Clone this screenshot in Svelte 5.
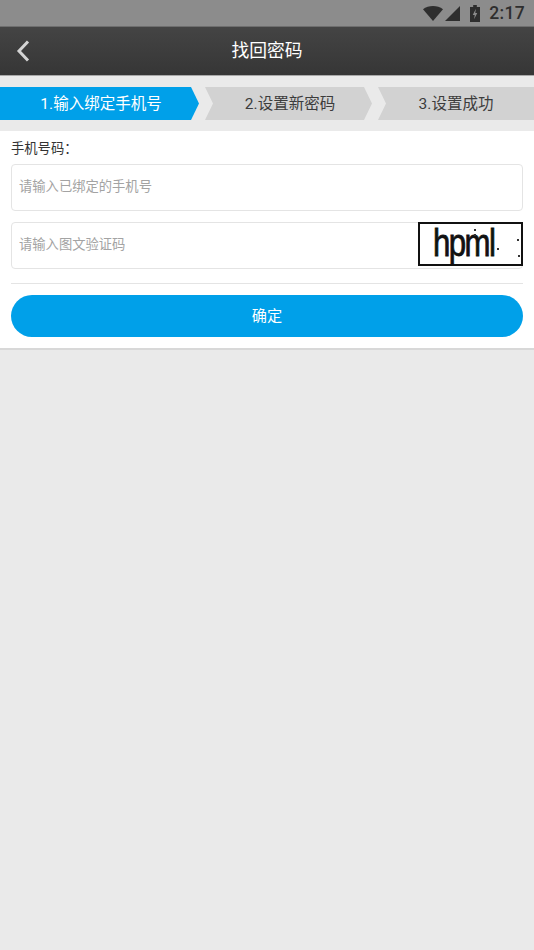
<script lang="ts">
    const steps = ['1.输入绑定手机号', '2.设置新密码', '3.设置成功'];
    let phone = $state('');
    let code = $state('');
</script>

<div class="page">
    <div class="statusbar">
        <svg class="wifi" viewBox="0 0 22 16" width="20" height="15" preserveAspectRatio="none"><path d="M0 3.500C3 1.200 7 0 11 0s8 1.200 11 3.500L11 16z" fill="#2e2e2e" /></svg>
        <svg class="signal" viewBox="0 0 15 15" width="15" height="15"><path d="M0 15L15 0v15z" fill="#2e2e2e" /></svg>
        <svg class="battery" viewBox="0 0 11 18" width="10" height="17" preserveAspectRatio="none">
            <path d="M3.500 0h4v2H11v16H0V2h3.500z" fill="#2e2e2e" />
            <path d="M6.500 4L3 10.500h2.200L4.500 15 8 8.500H5.800z" fill="#8c8c8c" />
        </svg>
        <span class="time">2:17</span>
    </div>

    <header class="topbar">
        <button class="back" aria-label="返回">
            <svg viewBox="0 0 14 22" width="14" height="22"><path d="M12 1.500L3 11l9 9.500" fill="none" stroke="#d4d4d4" stroke-width="3" /></svg>
        </button>
        <h1>找回密码</h1>
    </header>

    <div class="steps">
        {#each steps as step, i}
            <div class="step step-{i + 1}" class:active={i === 0}>{step}</div>
        {/each}
    </div>

    <form class="form" onsubmit={(e) => e.preventDefault()}>
        <div class="label">手机号码：</div>
        <input class="field" placeholder="请输入已绑定的手机号" bind:value={phone} />
        <div class="field code-row">
            <input placeholder="请输入图文验证码" bind:value={code} />
            <div class="captcha">
                <span>hpml</span>
                <i class="dot d1"></i>
                <i class="dot d2"></i>
                <i class="dot d3"></i>
                <i class="dot d4"></i>
                <i class="dot d5"></i>
            </div>
        </div>
        <div class="divider"></div>
        <button class="submit" type="submit">确定</button>
    </form>
</div>

<style>
    :global(body) {
        margin: 0;
        background: #eaeaea;
    }
    .page {
        height: 950px;
        background: #eaeaea;
        font-family: Roboto, "Noto Sans CJK SC", sans-serif;
        overflow: hidden;
    }
    .statusbar {
        height: 26px;
        background: #8c8c8c;
        border-bottom: 1px solid #6e6e6e;
        display: flex;
        align-items: center;
        justify-content: flex-end;
        padding-right: 9px;
    }
    .signal { margin-left: 2px; margin-right: 10px; }
    .battery { margin-right: 9px; }
    .time {
        font-size: 17.500px;
        font-weight: 500;
        color: #2e2e2e;
        letter-spacing: 0.300px;
    }
    .topbar {
        height: 49px;
        box-sizing: border-box;
        padding-bottom: 4px;
        background: linear-gradient(#444444, #363636);
        border-bottom: 1px solid #a8a8a8;
        position: relative;
        display: flex;
        align-items: center;
        justify-content: center;
    }
    .topbar h1 {
        margin: 0;
        font-size: 17.800px;
        font-weight: 400;
        color: #fff;
    }
    .back {
        position: absolute;
        left: 16px;
        top: 13px;
        padding: 0;
        background: none;
        border: none;
        line-height: 0;
    }
    .steps {
        display: flex;
        gap: 6px;
        padding: 11px 0;
        height: 33px;
        background: #eaeaea;
    }
    .step {
        height: 33px;
        box-sizing: border-box;
        padding-bottom: 3px;
        display: flex;
        align-items: center;
        justify-content: center;
        font-size: 15.500px;
        color: #3c3c3c;
        background: #d2d2d2;
        flex: none;
    }
    .step.active {
        color: #fff;
        background: #00a0e9;
    }
    .step-1 {
        width: 199px;
        padding-left: 3px;
        clip-path: polygon(0 0, 191px 0, 199px 50%, 191px 100%, 0 100%);
    }
    .step-2 {
        width: 167px;
        padding-left: 3px;
        clip-path: polygon(0 0, 159px 0, 167px 50%, 159px 100%, 0 100%, 8px 50%);
    }
    .step-3 {
        width: 156px;
        clip-path: polygon(0 0, 100% 0, 100% 100%, 0 100%, 8px 50%);
    }
    .form {
        background: #fff;
        padding: 10px 11px 11px;
        border-bottom: 2px solid #d8d8d8;
        display: flex;
        flex-direction: column;
    }
    .label {
        height: 15px;
        line-height: 15px;
        font-size: 13.300px;
        color: #333;
        margin-bottom: 8px;
    }
    .field {
        width: 100%;
        height: 47px;
        box-sizing: border-box;
        border: 1px solid #e4e4e4;
        border-radius: 4px;
        padding: 0 7px 3px;
        font: inherit;
        font-size: 13.300px;
        background: #fff;
        outline: none;
    }
    input::placeholder {
        color: #a3a3a3;
        opacity: 1;
    }
    .code-row {
        margin-top: 11px;
        display: flex;
        align-items: center;
        padding: 0 0 0 7px;
    }
    .code-row input {
        flex: 1;
        min-width: 0;
        border: none;
        outline: none;
        padding: 0 0 3px;
        font: inherit;
        font-size: 13.300px;
        background: none;
    }
    .captcha {
        position: relative;
        width: 105px;
        height: 44px;
        box-sizing: border-box;
        margin-right: -1px;
        margin-top: -3px;
        border: 2px solid #111;
        background: #fff;
        overflow: hidden;
        flex: none;
    }
    .captcha span {
        position: absolute;
        left: 13px;
        top: -1px;
        font-family: "Liberation Sans", sans-serif;
        font-size: 39px;
        line-height: 40px;
        letter-spacing: -2px;
        color: #111;
        -webkit-text-stroke: 0.800px #111;
        transform: scaleX(0.8);
        transform-origin: left center;
    }
    .dot {
        position: absolute;
        width: 2px;
        height: 2px;
        background: #333;
    }
    .d1 { left: 54px; top: 5px; }
    .d2 { left: 54px; top: 10px; }
    .d3 { left: 77px; top: 24px; }
    .d4 { left: 97px; top: 15px; }
    .d5 { left: 98px; top: 31px; }
    .divider {
        height: 1px;
        background: #e4e4e4;
        margin: 14px 0 11px;
    }
    .submit {
        height: 42px;
        border: none;
        border-radius: 21px;
        background: #00a0e9;
        color: #fff;
        font: inherit;
        font-size: 15.200px;
        padding: 0 0 4px;
    }
</style>
